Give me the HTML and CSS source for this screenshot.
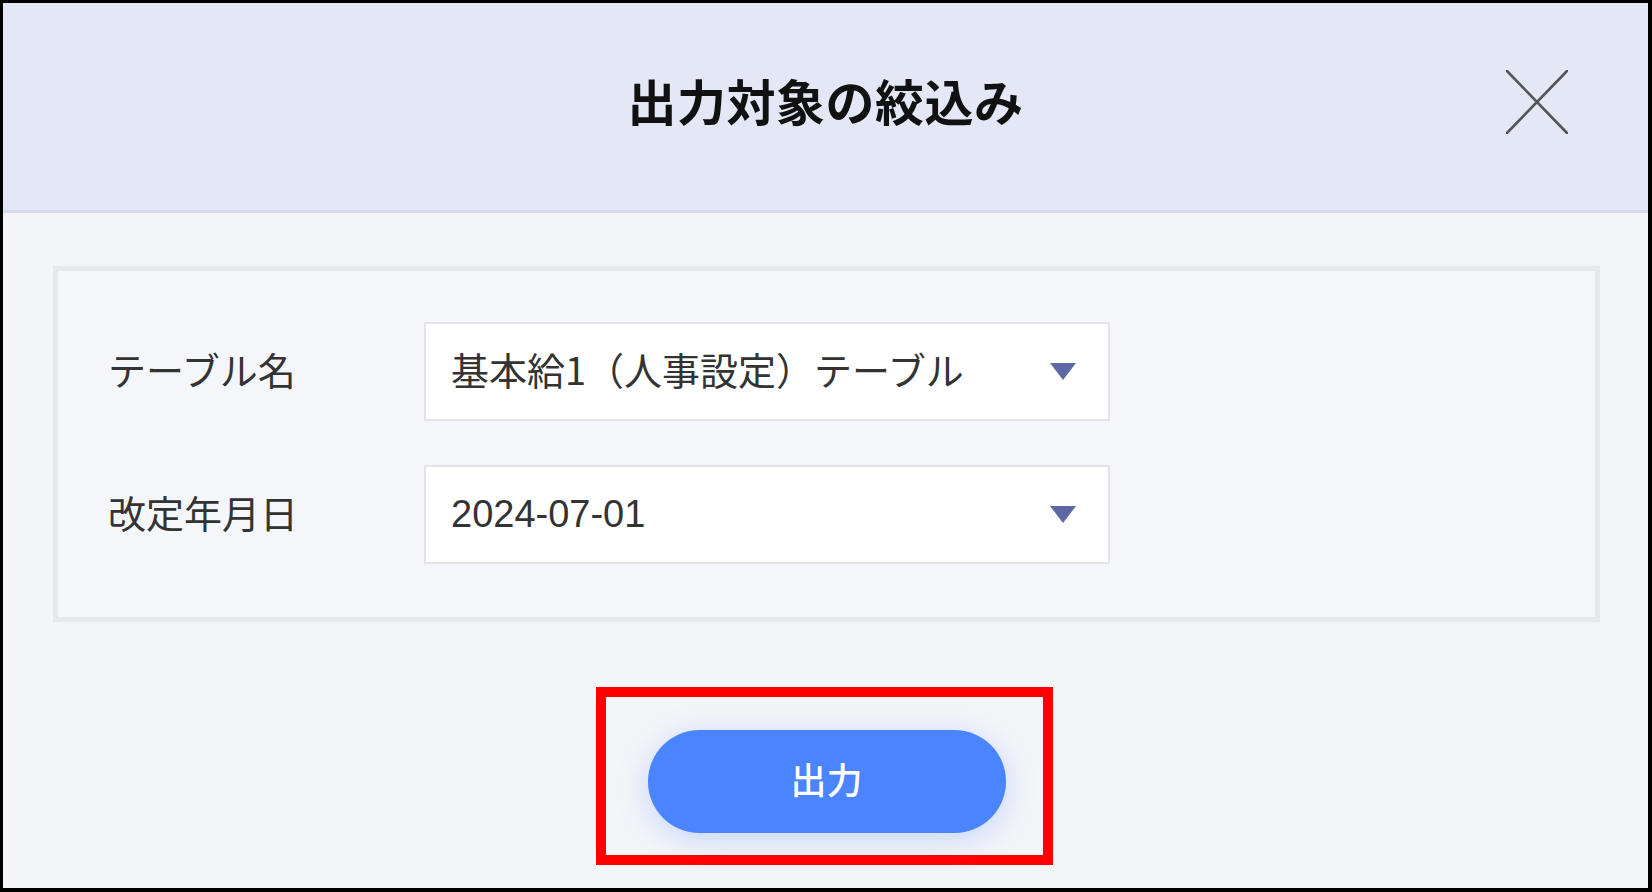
FILE: index.html
```html
<!DOCTYPE html>
<html lang="ja">
<head>
<meta charset="utf-8">
<title>出力対象の絞込み</title>
<link rel="stylesheet" href="styles.css">
</head>
<body>
<div class="frame">
  <header class="dlg-header">
    <h1 class="dlg-title">出力対象の絞込み</h1>
    <button class="dlg-close" aria-label="閉じる">
      <svg width="62" height="64" viewBox="0 0 62 64"><path d="M1 1 L61 63 M61 1 L1 63" stroke="#555" stroke-width="2.6" stroke-linecap="round" fill="none"/></svg>
    </button>
  </header>
  <main class="dlg-body">
    <section class="panel">
      <div class="row">
        <div class="label">テーブル名</div>
        <div class="select">
          <span class="select-text">基本給1（人事設定）テーブル</span>
          <span class="caret"></span>
        </div>
      </div>
      <div class="row">
        <div class="label">改定年月日</div>
        <div class="select">
          <span class="select-text num">2024-07-01</span>
          <span class="caret"></span>
        </div>
      </div>
    </section>
    <div class="actions">
      <div class="highlight">
        <button class="btn-primary">出力</button>
      </div>
    </div>
  </main>
</div>
</body>
</html>
```

FILE: styles.css
```css
html, body {
  margin: 0;
  padding: 0;
}
body {
  width: 1652px;
  height: 892px;
  background: #ffffff;
  font-family: "Noto Sans CJK JP", "Noto Sans", sans-serif;
}
.frame {
  box-sizing: border-box;
  width: 1652px;
  height: 892px;
  border-style: solid;
  border-color: #000;
  border-width: 3px 4px 4px 3px;
  background: #f4f5f9;
  display: flex;
  flex-direction: column;
}
.dlg-header {
  position: relative;
  height: 207px;
  flex: none;
  background: #e4e7f6;
  border-bottom: 3px solid #d7dbf0;
  display: flex;
  align-items: center;
  justify-content: center;
}
.dlg-title {
  margin: 0;
  padding-bottom: 14px;
  font-size: 49px;
  font-weight: 700;
  color: #111;
  letter-spacing: 0.5px;
  line-height: 1;
}
.dlg-close {
  position: absolute;
  right: 80px;
  top: 67px;
  width: 62px;
  height: 64px;
  padding: 0;
  border: 0;
  background: transparent;
  display: block;
}
.dlg-close svg { display: block; }
.dlg-body {
  flex: 1;
  padding: 53px 48px 0 50px;
  display: flex;
  flex-direction: column;
}
.panel {
  box-sizing: border-box;
  height: 356px;
  border: 5px solid #e7e8eb;
  background: #f5f6fa;
  padding: 51px 0 0 50px;
  display: flex;
  flex-direction: column;
  gap: 44px;
}
.row {
  display: flex;
  align-items: center;
  height: 99px;
}
.label {
  width: 316px;
  flex: none;
  font-size: 38px;
  color: #333;
  line-height: 1;
  padding-bottom: 6px;
}
.select {
  box-sizing: border-box;
  width: 686px;
  height: 99px;
  background: #fff;
  border: 2px solid #e4e4e6;
  display: flex;
  align-items: center;
  padding: 0 32px 0 25px;
}
.select-text {
  flex: 1;
  font-size: 38px;
  color: #333;
  line-height: 1;
  padding-bottom: 6px;
}
.select-text.num {
  font-family: "Liberation Sans", Arial, sans-serif;
  padding-bottom: 2px;
}
.caret {
  width: 0;
  height: 0;
  border-left: 13px solid transparent;
  border-right: 13px solid transparent;
  border-top: 17px solid #5d68a6;
}
.actions {
  display: flex;
  justify-content: center;
  margin-top: 65px;
}
.highlight {
  box-sizing: border-box;
  width: 457px;
  height: 178px;
  border: 10px solid #ff0000;
  display: flex;
  justify-content: center;
  padding-top: 33px;
  margin-left: -4px;
}
.btn-primary {
  width: 358px;
  height: 103px;
  border: 0;
  border-radius: 52px;
  background: #4a84fe;
  color: #fff;
  font-family: "Noto Sans CJK JP", "Noto Sans", sans-serif;
  font-size: 36px;
  font-weight: 500;
  padding: 0 0 8px;
  box-shadow: 0 6px 30px rgba(74, 132, 254, 0.28);
  margin-left: 4px;
}
```
